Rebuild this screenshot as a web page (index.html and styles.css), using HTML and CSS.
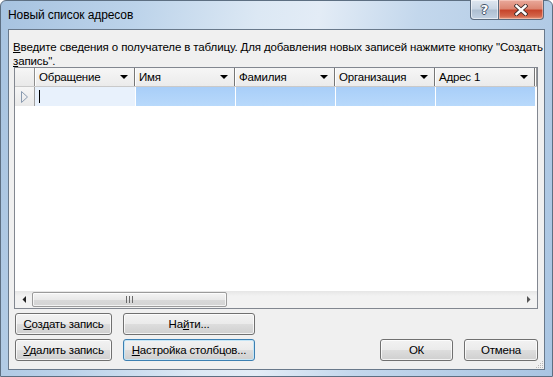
FILE: index.html
```html
<!DOCTYPE html>
<html lang="ru">
<head>
<meta charset="utf-8">
<title>Новый список адресов</title>
<link rel="stylesheet" href="styles.css">
</head>
<body>
<div class="window">
  <div class="titlebar">
    <span class="title">Новый список адресов</span>
    <div class="caption-btns">
      <div class="cb help"><span>?</span></div>
      <div class="cb close">
        <svg width="14" height="12" viewBox="0 0 14 12">
          <path d="M2.5 2 L11.5 10 M11.5 2 L2.5 10" stroke="#3a2a28" stroke-width="4.2" stroke-linecap="square"/>
          <path d="M2.5 2 L11.5 10 M11.5 2 L2.5 10" stroke="#fff" stroke-width="2.4" stroke-linecap="square"/>
        </svg>
      </div>
    </div>
  </div>
  <div class="client">
    <p class="intro"><u>В</u>ведите сведения о получателе в таблицу. Для добавления новых записей нажмите кнопку "Создать<br><u>з</u>апись".</p>
    <div class="grid">
      <div class="hrow">
        <div class="rh"></div>
        <div class="hc"><span>Обращение</span><svg class="dd" width="8" height="4" viewBox="0 0 8 4"><path d="M0 0 H8 L4 4 Z" fill="#000"/></svg></div>
        <div class="hc"><span>Имя</span><svg class="dd" width="8" height="4" viewBox="0 0 8 4"><path d="M0 0 H8 L4 4 Z" fill="#000"/></svg></div>
        <div class="hc"><span>Фамилия</span><svg class="dd" width="8" height="4" viewBox="0 0 8 4"><path d="M0 0 H8 L4 4 Z" fill="#000"/></svg></div>
        <div class="hc"><span>Организация</span><svg class="dd" width="8" height="4" viewBox="0 0 8 4"><path d="M0 0 H8 L4 4 Z" fill="#000"/></svg></div>
        <div class="hc"><span>Адрес 1</span><svg class="dd" width="8" height="4" viewBox="0 0 8 4"><path d="M0 0 H8 L4 4 Z" fill="#000"/></svg></div>
        <div class="hfill"></div>
      </div>
      <div class="drow">
        <div class="rh"><svg width="9" height="14" viewBox="0 0 9 14"><path d="M1.5 1.5 L7.5 7 L1.5 12.5 Z" fill="none" stroke="#8a9bb0" stroke-width="1"/></svg></div>
        <div class="dc cur"><i class="caret"></i></div>
        <div class="dc sel"></div>
        <div class="dc sel"></div>
        <div class="dc sel"></div>
        <div class="dc sel"></div>
        <div class="dfill"></div>
      </div>
      <div class="gbody"></div>
      <div class="hscroll">
        <div class="sarrow"><svg width="4" height="7" viewBox="0 0 4 7"><path d="M4 0 V7 L0.5 3.5 Z" fill="#222"/></svg></div>
        <div class="thumb"><span class="gripper"></span></div>
        <div class="track"></div>
        <div class="sarrow"><svg width="4" height="7" viewBox="0 0 4 7"><path d="M0 0 V7 L3.5 3.5 Z" fill="#555"/></svg></div>
      </div>
    </div>
    <div class="actions">
      <div class="left-btns">
        <button class="btn"><u>С</u>оздать запись</button>
        <button class="btn">На<u>й</u>ти...</button>
        <button class="btn"><u>У</u>далить запись</button>
        <button class="btn focus"><u>Н</u>астройка столбцов...</button>
      </div>
      <div class="dialog-btns">
        <button class="btn ok">ОК</button>
        <button class="btn cancel">Отмена</button>
      </div>
    </div>
    <div class="grip">
      <svg width="10" height="10" viewBox="0 0 10 10">
        <g fill="#b8b8b8">
          <rect x="8" y="2" width="1" height="1"/><rect x="6" y="4" width="1" height="1"/><rect x="8" y="4" width="1" height="1"/>
          <rect x="4" y="6" width="1" height="1"/><rect x="6" y="6" width="1" height="1"/><rect x="8" y="6" width="1" height="1"/>
          <rect x="2" y="8" width="1" height="1"/><rect x="4" y="8" width="1" height="1"/><rect x="6" y="8" width="1" height="1"/><rect x="8" y="8" width="1" height="1"/>
        </g>
      </svg>
    </div>
  </div>
</div>
</body>
</html>
```
FILE: styles.css
```css
* { box-sizing: border-box; }
html, body { margin: 0; padding: 0; }
body {
  width: 553px;
  height: 377px;
  overflow: hidden;
  font-family: "Liberation Sans", Arial, sans-serif;
  font-size: 11.5px;
  letter-spacing: -0.2px;
  color: #000;
}
.window {
  width: 553px;
  height: 377px;
  border: 1px solid #5d6f82;
  border-radius: 6px 6px 0 0;
  background: linear-gradient(100deg, #a7c3e0 0%, #bcd3ea 22%, #dce8f4 42%, #e3ecf6 52%, #c3d7ec 68%, #a9c5e2 100%);
  display: flex;
  flex-direction: column;
  padding: 0 7px 6px 7px;
  position: relative;
}
.titlebar {
  height: 28px;
  display: flex;
  justify-content: space-between;
  align-items: flex-start;
}
.title {
  margin-top: 6px;
  line-height: 16px;
  font-size: 12px;
  letter-spacing: -0.1px;
}
.caption-btns {
  display: flex;
  margin-top: -1px;
  margin-right: -7px;
  padding-right: 8px;
}
.cb {
  height: 20px;
  display: flex;
  align-items: center;
  justify-content: center;
  border: 1px solid #5b6b7e;
  border-top: none;
}
.help {
  width: 29px;
  border-radius: 0 0 0 4px;
  background: linear-gradient(#dfe7f0 0%, #c9d6e4 45%, #aebfd1 55%, #c2d2e3 100%);
  box-shadow: inset 0 0 0 1px rgba(255,255,255,0.55);
}
.help span {
  font-family: "DejaVu Sans", sans-serif;
  font-weight: bold;
  font-size: 13px;
  letter-spacing: 0;
  color: #fff;
  text-shadow: 1px 0 #45546a, -1px 0 #45546a, 0 1px #45546a, 0 -1px #45546a;
  line-height: 1;
}
.close {
  width: 45px;
  border-left: none;
  border-radius: 0 0 4px 0;
  background: linear-gradient(#e9a99b 0%, #dc8672 45%, #c7452c 55%, #d3654a 85%, #e59a7e 100%);
  box-shadow: inset 0 0 0 1px rgba(255,220,210,0.5);
}
.client {
  flex: 1;
  border: 1px solid #69798b;
  background: #f0f0f0;
  display: flex;
  flex-direction: column;
  padding: 10px 3px 0 3px;
  position: relative;
}
.intro {
  margin: 0 0 0 1px;
  line-height: 14px;
  white-space: nowrap;
  height: 27px;
  letter-spacing: -0.12px;
}
.grid {
  margin: 0 3px 0 2px;
  height: 242px;
  border: 1px solid #828790;
  background: #fff;
  display: flex;
  flex-direction: column;
}
.hrow {
  height: 19px;
  display: flex;
  border-bottom: 1px solid #c9c9c9;
  background: linear-gradient(#f6f6f6, #ebebeb);
  flex: none;
}
.rh {
  width: 20px;
  flex: none;
  border-right: 1px solid #8d8d8d;
  background: linear-gradient(#f6f6f6, #e9e9e9);
  display: flex;
  align-items: center;
  justify-content: center;
}
.hc {
  width: 100px;
  flex: none;
  display: flex;
  align-items: center;
  padding: 0 6px 0 3px;
  border-left: 1px solid #fff;
  border-right: 1px solid #767676;
  line-height: 16px;
}
.hc .dd { margin-left: auto; flex: none; }
.hfill {
  flex: 1;
  border-left: 1px solid #fff;
  border-right: 1px solid #9a9a9a;
}
.drow {
  height: 19px;
  display: flex;
  flex: none;
}
.drow .rh { border-right-color: #a0a0a0; }
.dc {
  width: 100px;
  flex: none;
}
.cur {
  background: #e8f1fc;
  position: relative;
}
.caret {
  position: absolute;
  left: 4px;
  top: 3px;
  width: 1px;
  height: 13px;
  background: #000;
}
.sel {
  background: linear-gradient(#a8cef8, #b8d9fb);
  border-left: 1px solid #fff;
}
.dfill {
  flex: 1;
  border-left: 1px solid #fff;
  background: linear-gradient(#a8cef8, #b8d9fb);
  margin-right: 3px;
}
.gbody { flex: 1; }
.hscroll {
  height: 17px;
  display: flex;
  flex: none;
  background: linear-gradient(#e6e6e6, #f2f2f2 30%, #f2f2f2);
}
.sarrow {
  width: 17px;
  display: flex;
  align-items: center;
  justify-content: center;
}
.thumb {
  width: 195px;
  margin: 1px 0;
  border: 1px solid #9b9b9b;
  border-radius: 2px;
  background: linear-gradient(#f4f4f4 0%, #e9e9e9 50%, #d9d9d9 51%, #d4d4d4 100%);
  box-shadow: inset 0 0 0 1px rgba(255,255,255,0.7);
  display: flex;
  align-items: center;
  justify-content: center;
}
.gripper {
  width: 7px;
  height: 7px;
  background: repeating-linear-gradient(90deg, #6a6a6a 0 1px, transparent 1px 3px);
}
.track { flex: 1; }
.actions {
  display: flex;
  align-items: flex-end;
  padding: 4px 3px 0 3px;
}
.left-btns {
  display: grid;
  grid-template-columns: 97px 132px;
  grid-auto-rows: 22px;
  column-gap: 11px;
  row-gap: 4px;
}
.dialog-btns {
  margin-left: auto;
  display: flex;
  gap: 11px;
}
.btn {
  height: 22px;
  padding: 0;
  font-family: inherit;
  font-size: 11.5px;
  letter-spacing: -0.2px;
  color: #000;
  border: 1px solid #707070;
  border-radius: 3px;
  background: linear-gradient(#f2f2f2 0%, #ebebeb 48%, #dddddd 52%, #cfcfcf 100%);
  box-shadow: inset 0 0 0 1px rgba(255,255,255,0.75);
  line-height: 18px;
}
.btn.focus {
  border-color: #3c7fb1;
  box-shadow: inset 0 0 0 1px #c4e5f6;
}
.ok { width: 73px; }
.cancel { width: 74px; }
.grip {
  position: absolute;
  right: 0;
  bottom: 0;
  width: 10px;
  height: 10px;
  display: flex;
}
```
